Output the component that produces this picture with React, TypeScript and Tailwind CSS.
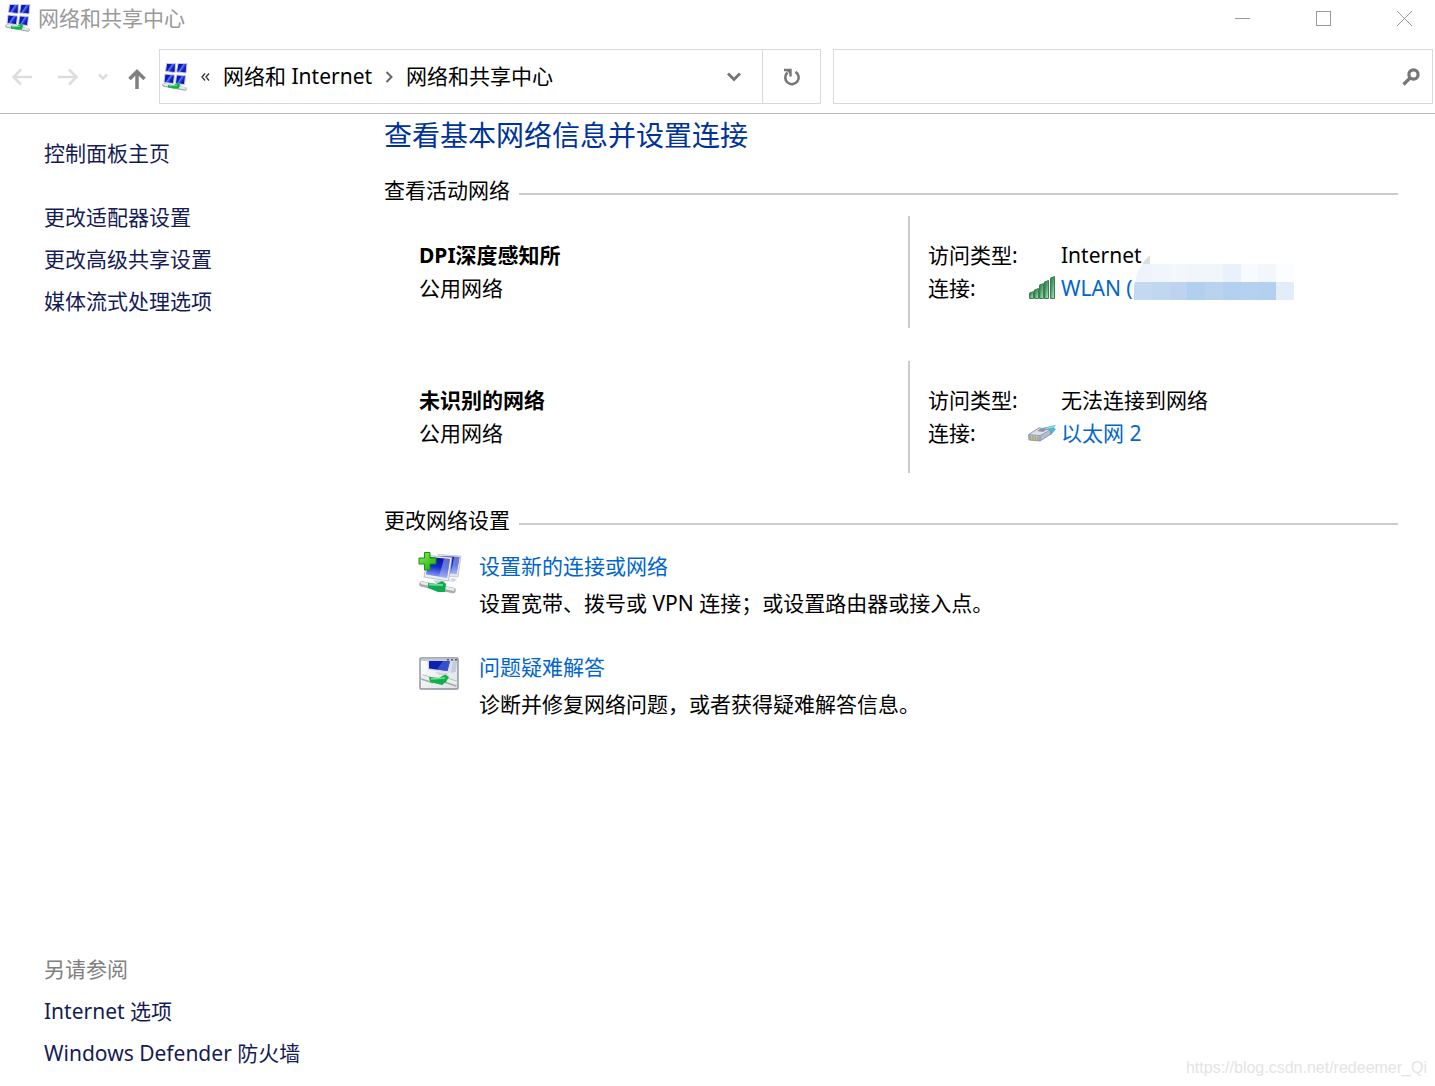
import React from "react";

const screenQuads = [
  "M4.500 0.500 L13.500 0.500 L13 9.500 L3.500 8.500Z",
  "M16 0.500 L25 0.500 L24 10 L14.500 9Z",
  "M3 11 L12.500 12 L11.500 20.500 L2 19.500Z",
  "M14.500 12 L23.500 12.500 L22.500 21.500 L13.500 20.500Z",
];

function NetworkIcon() {
  return (
    <svg width="28" height="28" viewBox="0 0 28 28" aria-hidden="true" className="shrink-0">
      <defs>
        <linearGradient id="scr" x1="0" y1="0" x2="1" y2="0.6">
          <stop offset="0" stopColor="#1018a4" />
          <stop offset="0.45" stopColor="#0a18c8" />
          <stop offset="0.55" stopColor="#5f7cf0" />
          <stop offset="0.75" stopColor="#1524c4" />
          <stop offset="1" stopColor="#0a0c98" />
        </linearGradient>
      </defs>
      {screenQuads.map((d) => (
        <path key={d} d={d} fill="url(#scr)" stroke="#c6cde0" strokeWidth="1" />
      ))}
      <path d="M12 21 L19 22 L20 24 L14 23Z" fill="#cdd2d6" />
      <path d="M2 22 L23 26" stroke="#a3adad" strokeWidth="3.600" strokeLinecap="round" />
      <path d="M2 21.500 L23 25.500" stroke="#e6ecec" strokeWidth="1.800" strokeLinecap="round" />
      <path d="M6 22 L12 22 L16 19.500 L18 21.500 L17 25.500 L12 25.500 L6 24.500Z" fill="#12b348" />
      <path d="M7 22.700 L15 22.300" stroke="#5ee58a" strokeWidth="1.200" />
    </svg>
  );
}

function SignalIcon() {
  return (
    <svg width="28" height="28" viewBox="0 0 28 28" aria-hidden="true">
      <defs>
        <linearGradient id="sig" x1="0" y1="0" x2="1" y2="1">
          <stop offset="0" stopColor="#2a7d43" />
          <stop offset="0.4" stopColor="#4c9c66" />
          <stop offset="1" stopColor="#b4efc4" />
        </linearGradient>
      </defs>
      {[[1, 16], [6, 13], [11, 8], [16, 5], [22, 1]].map(([x, y]) => (
        <path key={x} d={`M${x + 0.5} ${y + 2} L${x + 4.5} ${y + 0.5} V23.500 H${x + 0.5}Z`} fill="url(#sig)" stroke="#3c7d52" strokeWidth="1" />
      ))}
    </svg>
  );
}

function EthernetIcon() {
  return (
    <svg width="28" height="18" viewBox="0 0 28 18" aria-hidden="true">
      <path d="M14 3 L28 0 L26 3 L28 4 L23 10 L19 9Z" fill="#4ab8d6" />
      <path d="M16 4 L27 1.500" stroke="#a9e2ee" strokeWidth="1" />
      <path d="M0.500 10 L11 3 L22 5 L23 9 L12 16 L1 15Z" fill="#b4bccf" stroke="#8088a0" strokeWidth="0.800" />
      <path d="M0.500 9.500 L11 3 L22 5 L12 10.500Z" fill="#dde2ec" stroke="#8d95a8" strokeWidth="0.800" />
      <path d="M9 6 L13 3.500 L19 4.500 L15 7Z" fill="#8b94a8" />
      <path d="M12 10.500 V16" stroke="#8088a0" strokeWidth="0.800" />
      <path d="M2.500 11 V14.500 M5 11 V15 M7.500 11.500 V15.500 M10 11.500 V15.500" stroke="#b5a850" strokeWidth="1.200" />
    </svg>
  );
}

function NewConnectionIcon() {
  return (
    <svg width="44" height="44" viewBox="0 0 44 44" aria-hidden="true" className="mt-1">
      <defs>
        <linearGradient id="mon" x1="0.5" y1="0" x2="0.3" y2="1">
          <stop offset="0" stopColor="#0a12a0" />
          <stop offset="0.45" stopColor="#1128cc" />
          <stop offset="1" stopColor="#9db2f8" />
        </linearGradient>
        <linearGradient id="plus" x1="0" y1="0" x2="1" y2="1">
          <stop offset="0" stopColor="#8cf05c" />
          <stop offset="1" stopColor="#18a80c" />
        </linearGradient>
      </defs>
      <path d="M20 2.500 L43 4 L40 25 L28 24Z" fill="#e2e6ec" stroke="#bcc3ce" strokeWidth="0.800" />
      <path d="M22 4 L41.500 5 L38.500 22 L28 21Z" fill="url(#mon)" />
      <path d="M36 5 L41.500 5 L38.500 22 L33 21.500Z" fill="#b6c5fa" opacity="0.55" />
      <path d="M34 26 L39 27 L36 30 L31 29Z" fill="#d5d9de" />
      <path d="M10 3.500 L34 5.500 L30.500 29 L6 25Z" fill="#eceff4" stroke="#aab2c2" strokeWidth="0.800" />
      <path d="M11 5 L32 7 L29 26 L8 22.500Z" fill="url(#mon)" />
      <path d="M26 6.500 L32 7 L29 26 L21 24.700Z" fill="#b6c5fa" opacity="0.5" />
      <path d="M15 28 L26 29 L29 33 L18 31Z" fill="#cdd2d6" />
      <path d="M4 32 L35 38.500" stroke="#a5aeac" strokeWidth="5.500" strokeLinecap="round" />
      <path d="M4 31 L35 37.500" stroke="#e8eeec" strokeWidth="2.800" strokeLinecap="round" />
      <path d="M10 31 L18 32 L24 29 L28 32 L27 40 L20 40 L10 36Z" fill="#12a850" />
      <path d="M11 32.500 L25 33" stroke="#68dc94" strokeWidth="2" />
      <path d="M6.500 0.500 H12 V6 H18 V12 H12 V18 H6.500 V12 H1 V6 H6.500Z" fill="url(#plus)" stroke="#189010" />
    </svg>
  );
}

function TroubleshootIcon() {
  return (
    <svg width="42" height="34" viewBox="-1 0 42 34" aria-hidden="true" className="mt-2">
      <defs>
        <linearGradient id="pane" x1="0" y1="0" x2="1" y2="1">
          <stop offset="0" stopColor="#ffffff" />
          <stop offset="1" stopColor="#dfe1e4" />
        </linearGradient>
      </defs>
      <rect x="1" y="1" width="38" height="31" rx="1" fill="url(#pane)" stroke="#8b919b" strokeWidth="1.400" />
      <path d="M8 4 L35 4 L32 16 L9 13Z" fill="#d9dee8" />
      <path d="M10 4 L31 4 L28.500 14 L10 11.500Z" fill="#1020b0" />
      <path d="M24 4 L31 4 L28.500 14 L18 12.500Z" fill="#5a74e4" opacity="0.55" />
      <path d="M34 4 H38 L37 15 L32 16Z" fill="#c3cbe0" />
      <path d="M16 15 L28 16 L30 19 L20 18Z" fill="#d3d7db" />
      <path d="M2 2.800 H38" stroke="#c4cad4" strokeWidth="2.400" />
      <path d="M28 2.800 H30 M32 2.800 H34 M36 2.800 H38" stroke="#535b6c" strokeWidth="1.500" />
      <path d="M3 20 L15 24 M26 23 L38 27" stroke="#a2aaaa" strokeWidth="6" />
      <path d="M3 19.500 L15 23.500 M26 22.500 L38 26.500" stroke="#e9eded" strokeWidth="3.500" />
      <path d="M10 20 L20 21 L26 17.500 L30 20 L27 25 L23 28 L11 25Z" fill="#12b04a" />
      <path d="M12 22 L26 21" stroke="#6ce394" strokeWidth="1.500" />
    </svg>
  );
}

function SideLink({ children }: { children: React.ReactNode }) {
  return (
    <a href="#" className="text-[#151c55] hover:underline">
      {children}
    </a>
  );
}

function SectionTitle({ children }: { children: React.ReactNode }) {
  return (
    <div className="flex items-center gap-[9px] leading-7">
      <h2>{children}</h2>
      <div className="mt-[7px] h-[2px] flex-1 bg-[#cccccc]" />
    </div>
  );
}

function NetworkRow({ name, access, icon, children }: { name: string; access: string; icon: React.ReactNode; children: React.ReactNode }) {
  return (
    <div className="grid h-28 grid-cols-[524fr_490fr] leading-[33px]">
      <div className="flex flex-col justify-center pl-[35px]">
        <h3 className="font-bold">{name}</h3>
        <p>公用网络</p>
      </div>
      <dl className="grid grid-cols-[100px_33px_1fr] content-center border-l-2 border-[#cccccc] pl-[18px]">
        <dt className="col-span-2">访问类型:</dt>
        <dd>{access}</dd>
        <dt>连接:</dt>
        <dd className="flex items-center">{icon}</dd>
        <dd className="flex">{children}</dd>
      </dl>
    </div>
  );
}

function Task({ icon, title, text }: { icon: React.ReactNode; title: string; text: string }) {
  return (
    <div className="flex pl-[34px]">
      <div className="flex w-[61px] shrink-0 items-start">{icon}</div>
      <div className="leading-[37px]">
        <a href="#" className="block text-[#0066cc] hover:underline">
          {title}
        </a>
        <p>{text}</p>
      </div>
    </div>
  );
}

const topTiles = ["bg-[#edf4fc]", "bg-[#f1f6fc]", "bg-[#f2f7fc]", "bg-[#f1f6fb]", "bg-[#f1f6fb]", "bg-[#e9f2fc]", "bg-[#f8fbfe]", "bg-[#f1f7fc]", "bg-[#fbfdff]"];
const bottomTiles = ["bg-[#c3d8f1]", "bg-[#c0d7f0]", "bg-[#bdd3f0]", "bg-[#b1cfef]", "bg-[#b9d3ef]", "bg-[#b2d0ef]", "bg-[#b4d1f0]", "bg-[#b3d0ef]", "bg-[#e3edf9]"];

function Mosaic() {
  return (
    <div className="absolute top-[-8px] left-[73px] w-[160px]" aria-hidden="true">
      <svg width="16" height="10" viewBox="0 0 16 10" className="absolute top-[-9px] left-2">
        <path d="M0 10 Q3 4 8 0 V10Z" fill="#dddddd" />
      </svg>
      <div className="grid grid-cols-9 [clip-path:polygon(5%_0,100%_0,100%_100%,0_100%,0_60%,2%_25%)]">
        {topTiles.map((c, i) => (
          <div key={i} className={`h-[18px] ${c}`} />
        ))}
        {bottomTiles.map((c, i) => (
          <div key={i} className={`h-[18px] ${c}`} />
        ))}
      </div>
    </div>
  );
}

export default function App() {
  return (
    <div className="relative flex min-h-screen flex-col bg-white font-['Noto_Sans','Noto_Sans_CJK_SC',sans-serif] text-[21px] text-black" lang="zh-CN">
      <header className="border-b border-[#bbbbbb]">
        <div className="flex h-9 items-center justify-between">
          <div className="flex items-center gap-[5px] pl-[5px] text-[#999999]">
            <NetworkIcon />
            <h1 className="leading-9">网络和共享中心</h1>
          </div>
          <div className="flex gap-[19px] text-[#999999]">
            <button aria-label="最小化" className="flex h-9 w-[62px] items-center justify-center">
              <svg width="15" height="15" viewBox="0 0 15 15"><path d="M0 7.500H15" stroke="currentColor" /></svg>
            </button>
            <button aria-label="最大化" className="flex h-9 w-[62px] items-center justify-center">
              <svg width="15" height="15" viewBox="0 0 15 15"><rect x="0.500" y="0.500" width="14" height="14" fill="none" stroke="currentColor" /></svg>
            </button>
            <button aria-label="关闭" className="flex h-9 w-[62px] items-center justify-center">
              <svg width="15" height="15" viewBox="0 0 15 15"><path d="M0 0L15 15M15 0L0 15" stroke="currentColor" /></svg>
            </button>
          </div>
        </div>
        <div className="flex items-center pt-[13px] pr-[2px] pb-[9px]">
          <nav className="flex w-[159px] shrink-0 items-center pl-3">
            <button aria-label="后退" className="text-[#dddddd]">
              <svg width="20" height="18" viewBox="0 0 20 18" fill="none" stroke="currentColor" strokeWidth="2.500"><path d="M20 9H2M9 1.500L1.500 9L9 16.500" /></svg>
            </button>
            <button aria-label="前进" className="ml-[26px] text-[#dddddd]">
              <svg width="20" height="18" viewBox="0 0 20 18" fill="none" stroke="currentColor" strokeWidth="2.500"><path d="M0 9H18M11 1.500L18.500 9L11 16.500" /></svg>
            </button>
            <button aria-label="最近位置" className="ml-5 text-[#dddddd]">
              <svg width="10" height="8" viewBox="0 0 10 8" fill="none" stroke="currentColor" strokeWidth="2.500"><path d="M1 1.500L5 5.500L9 1.500" /></svg>
            </button>
            <button aria-label="上移" className="mt-1 ml-5 text-[#808080]">
              <svg width="18" height="20" viewBox="0 0 18 20" fill="none" stroke="currentColor" strokeWidth="3.500"><path d="M9 20V3M1.500 10L9 2.500L16.500 10" /></svg>
            </button>
          </nav>
          <div className="grid flex-1 grid-cols-[662fr_600fr] gap-3">
            <div className="flex h-[55px] border border-[#d9d9d9]">
              <div className="flex flex-1 items-center pl-[2px]">
                <NetworkIcon />
                <svg width="9" height="8" viewBox="0 0 9 8" fill="none" stroke="#333333" strokeWidth="1.300" className="ml-[11px]"><path d="M4 0.500L1 4L4 7.500M8 0.500L5 4L8 7.500" /></svg>
                <a href="#" className="ml-[13px] whitespace-nowrap">网络和 Internet</a>
                <svg width="8" height="12" viewBox="0 0 8 12" fill="none" stroke="#666666" strokeWidth="2" className="mx-[13px]"><path d="M1.500 1L6.500 6L1.500 11" /></svg>
                <a href="#" className="whitespace-nowrap">网络和共享中心</a>
                <button aria-label="历史记录" className="mr-[21px] ml-auto">
                  <svg width="14" height="10" viewBox="0 0 14 10" fill="none" stroke="#777777" strokeWidth="3"><path d="M1 1.500L7 7.500L13 1.500" /></svg>
                </button>
              </div>
              <button aria-label="刷新" className="flex w-[58px] items-center justify-center border-l border-[#d9d9d9]">
                <svg width="18" height="18" viewBox="0 0 18 18" fill="none" stroke="#777777"><path d="M12.500 3.800A6.700 6.700 0 1 1 4.500 4.500" strokeWidth="2.600" /><path d="M1 2H7.500V8.500" strokeWidth="2.400" /><path d="M3 2H8V7Z" fill="#777777" stroke="none" /></svg>
              </button>
            </div>
            <label className="flex h-[55px] items-center border border-[#d9d9d9] pr-3">
              <input type="text" aria-label="搜索控制面板" className="h-full min-w-0 flex-1 px-3 outline-none" />
              <svg width="18" height="18" viewBox="0 0 18 18" fill="none" stroke="#777777"><circle cx="11.500" cy="6.500" r="4.600" strokeWidth="3.200" /><path d="M8 10L1.500 16.500" strokeWidth="3.200" /></svg>
            </label>
          </div>
        </div>
      </header>

      <div className="flex flex-1">
        <aside className="flex w-[384px] shrink-0 flex-col justify-between pt-[18px] pb-3 pl-11 leading-[42px]">
          <nav className="flex flex-col items-start">
            <SideLink>控制面板主页</SideLink>
            <div className="mt-[22px] flex flex-col items-start">
              <SideLink>更改适配器设置</SideLink>
              <SideLink>更改高级共享设置</SideLink>
              <SideLink>媒体流式处理选项</SideLink>
            </div>
          </nav>
          <nav className="flex flex-col items-start">
            <p className="text-[#808080]">另请参阅</p>
            <SideLink>Internet 选项</SideLink>
            <SideLink>Windows Defender 防火墙</SideLink>
          </nav>
        </aside>

        <main className="flex-1 pr-[37px]">
          <h2 className="text-[28px] leading-[42px] text-[#003399]">查看基本网络信息并设置连接</h2>
          <section className="mt-5">
            <SectionTitle>查看活动网络</SectionTitle>
            <div className="mt-3 flex flex-col gap-[33px]">
              <NetworkRow name="DPI深度感知所" access="Internet" icon={<SignalIcon />}>
                <div className="relative">
                  <a href="#" className="text-[#0066cc] hover:underline">WLAN (</a>
                  <Mosaic />
                </div>
              </NetworkRow>
              <NetworkRow name="未识别的网络" access="无法连接到网络" icon={<EthernetIcon />}>
                <a href="#" className="text-[#0066cc] hover:underline">以太网 2</a>
              </NetworkRow>
            </div>
          </section>
          <section className="mt-[33px]">
            <SectionTitle>更改网络设置</SectionTitle>
            <div className="mt-[14px] flex flex-col gap-[27px]">
              <Task icon={<NewConnectionIcon />} title="设置新的连接或网络" text="设置宽带、拨号或 VPN 连接；或设置路由器或接入点。" />
              <Task icon={<TroubleshootIcon />} title="问题疑难解答" text="诊断并修复网络问题，或者获得疑难解答信息。" />
            </div>
          </section>
        </main>
      </div>
      <p className="absolute right-2 bottom-2 font-['Liberation_Sans',sans-serif] text-base leading-5 text-[#e4e4e4]">https://blog.csdn.net/redeemer_Qi</p>
    </div>
  );
}
